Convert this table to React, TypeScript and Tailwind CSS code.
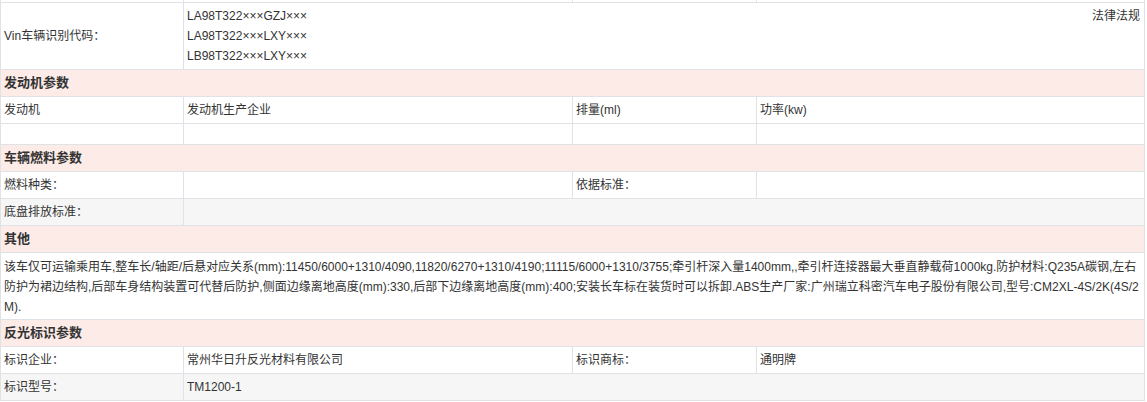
import React from 'react';

const font = { fontFamily: '"Liberation Sans", Arial, "Noto Sans CJK SC", sans-serif' };

const Cell: React.FC<{ w?: string; last?: boolean; children?: React.ReactNode }> = ({ w = 'w-[183px]', last, children }) => (
  <div className={`${w} ${last ? 'flex-1' : 'border-r border-[#dfe3e8]'} flex items-center pl-[3px] whitespace-nowrap`}>{children}</div>
);

const Row4: React.FC<{ cells: React.ReactNode[]; gray?: boolean; h?: string }> = ({ cells, gray, h = 'h-[27px]' }) => (
  <div className={`flex ${h} border-b border-[#dfe3e8] ${gray ? 'bg-[#f6f6f6]' : 'bg-white'}`}>
    <Cell w="w-[183px]">{cells[0]}</Cell>
    <Cell w="w-[389px]">{cells[1]}</Cell>
    <Cell w="w-[184px]">{cells[2]}</Cell>
    <Cell last>{cells[3]}</Cell>
  </div>
);

const Row2: React.FC<{ label: string; value?: React.ReactNode; gray?: boolean }> = ({ label, value, gray }) => (
  <div className={`flex h-[27px] border-b border-[#dfe3e8] ${gray ? 'bg-[#f6f6f6]' : 'bg-white'}`}>
    <Cell w="w-[183px]">{label}</Cell>
    <Cell last>{value}</Cell>
  </div>
);

const Header: React.FC<{ title: string }> = ({ title }) => (
  <div className="h-[27px] border-b border-[#dfe3e8] bg-[#fdebe8] flex items-center pl-[3px] text-[13px] font-bold text-[#333]">
    {title}
  </div>
);

export default function App() {
  return (
    <div className="bg-white w-[1147px] h-[402px] overflow-hidden" style={font}>
      <div className="w-[1145px] border-x border-[#dfe3e8] text-[12px] text-[#333]">
        <Row4 h="h-[3px]" cells={[null, null, null, null]} />

        <div className="flex h-[67px] border-b border-[#dfe3e8]">
          <div className="w-[183px] border-r border-[#dfe3e8] flex items-center pl-[3px]">Vin车辆识别代码：</div>
          <div className="flex-1 flex justify-between pt-[3px] pl-[3px] pr-[4px] leading-[20px]">
            <div className="flex flex-col">
              <span>LA98T322×××GZJ×××</span>
              <span>LA98T322×××LXY×××</span>
              <span>LB98T322×××LXY×××</span>
            </div>
            <span>法律法规</span>
          </div>
        </div>

        <Header title="发动机参数" />
        <Row4 cells={['发动机', '发动机生产企业', '排量(ml)', '功率(kw)']} />
        <Row4 h="h-[21px]" cells={[null, null, null, null]} />

        <Header title="车辆燃料参数" />
        <Row4 cells={['燃料种类：', null, '依据标准：', null]} />
        <Row2 label="底盘排放标准：" gray />

        <Header title="其他" />
        <div className="h-[67px] border-b border-[#dfe3e8] pt-[4px] pl-[3px] pr-[4px] leading-[20px] break-all">
          该车仅可运输乘用车,整车长/轴距/后悬对应关系(mm):11450/6000+1310/4090,11820/6270+1310/4190;11115/6000+1310/3755;牵引杆深入量1400mm,,牵引杆连接器最大垂直静载荷1000kg.防护材料:Q235A碳钢,左右防护为裙边结构,后部车身结构装置可代替后防护,侧面边缘离地高度(mm):330,后部下边缘离地高度(mm):400;安装长车标在装货时可以拆卸.ABS生产厂家:广州瑞立科密汽车电子股份有限公司,型号:CM2XL-4S/2K(4S/2M).
        </div>

        <Header title="反光标识参数" />
        <Row4 cells={['标识企业：', '常州华日升反光材料有限公司', '标识商标：', '通明牌']} />
        <Row2 label="标识型号：" value="TM1200-1" gray />
      </div>
    </div>
  );
}
